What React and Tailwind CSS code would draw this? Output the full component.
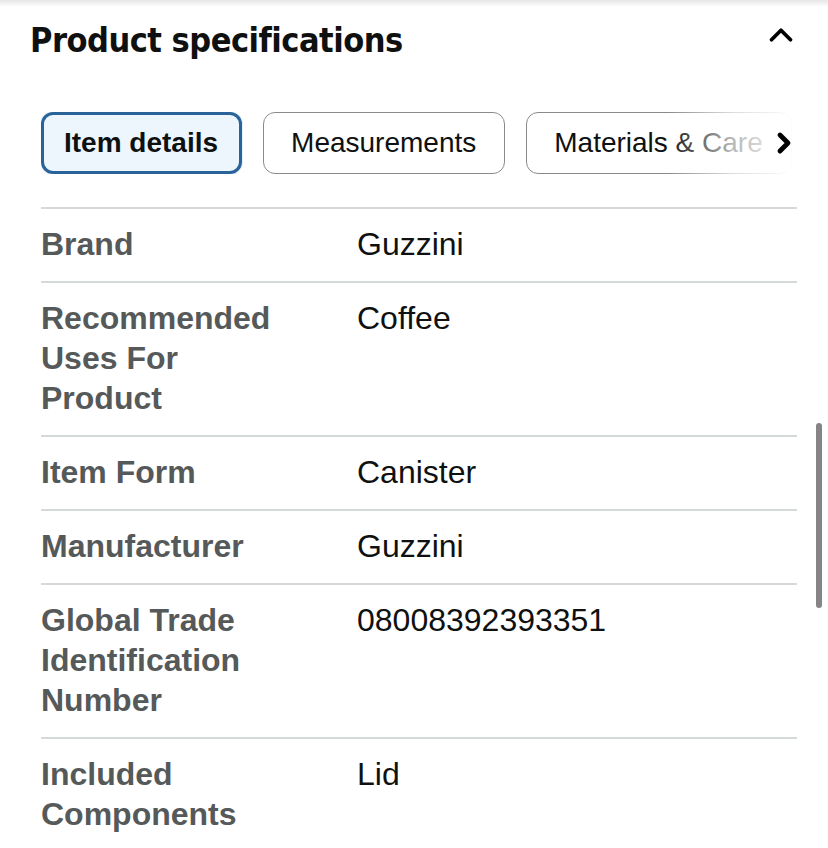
import { ChevronUp, ChevronRight } from "lucide-react";
import clsx from "clsx";

const specs = [
  { label: "Brand", value: "Guzzini" },
  { label: "Recommended Uses For Product", value: "Coffee" },
  { label: "Item Form", value: "Canister" },
  { label: "Manufacturer", value: "Guzzini" },
  { label: "Global Trade Identification Number", value: "08008392393351" },
  { label: "Included Components", value: "Lid" },
];

const tabs = ["Item details", "Measurements", "Materials & Care"];

export default function App() {
  return (
    <div className="relative w-[828px] h-[848px] overflow-hidden bg-white font-['Liberation_Sans',Arial,sans-serif] text-[#0f1111]">
      {/* top fade */}
      <div className="absolute top-0 left-0 right-0 h-[7px] bg-gradient-to-b from-[#e6e6e8] to-white" />

      {/* Header */}
      <div className="flex items-center justify-between pl-[30px] pr-[28px] pt-[17px] h-[62px]">
        <div className="font-['DejaVu_Sans_Condensed','Noto_Sans',sans-serif] font-bold text-[34px] tracking-[-0.5px] leading-none">
          Product specifications
        </div>
        <ChevronUp size={38} strokeWidth={2.4} className="text-black -mt-[9px]" />
      </div>

      {/* Tabs */}
      <div className="relative mt-[50px] ml-[41px] w-[756px] overflow-hidden">
        <div className="flex gap-[21px] whitespace-nowrap">
          {tabs.map((t, i) => (
            <div
              key={t}
              className={clsx(
                "h-[62px] flex items-center shrink-0 rounded-[12px] text-[28px]",
                i === 0
                  ? "border-[3px] border-[#2a6399] bg-[#edf6fd] font-bold pl-[20px] pr-[21px] shadow-[0_0_0_1px_#e4eef7]"
                  : "border-[1.5px] border-[#8a8a8a] bg-white pl-[27px] pr-[28px]"
              )}
            >
              {t}
            </div>
          ))}
        </div>
        <div className="absolute top-0 right-0 h-[62px] w-[130px] bg-gradient-to-r from-white/0 via-white/70 to-white" />
        <ChevronRight
          size={32}
          strokeWidth={3.6}
          className="absolute -right-[3px] top-[15px] text-black"
        />
      </div>

      {/* Spec rows */}
      <div className="mt-[33px] ml-[41px] w-[756px]">
        {specs.map((s) => (
          <div
            key={s.label}
            className="flex border-t-2 border-[#d5d9d9] pt-[15px] pb-[17px] text-[32px] leading-[40px]"
          >
            <div className="w-[316px] shrink-0 pr-[60px] font-bold text-[#565959]">{s.label}</div>
            <div className="text-[#0f1111]">{s.value}</div>
          </div>
        ))}
      </div>

      {/* scrollbar */}
      <div className="absolute right-[6px] top-[423px] h-[185px] w-[6px] rounded-full bg-[#858585]" />
    </div>
  );
}
